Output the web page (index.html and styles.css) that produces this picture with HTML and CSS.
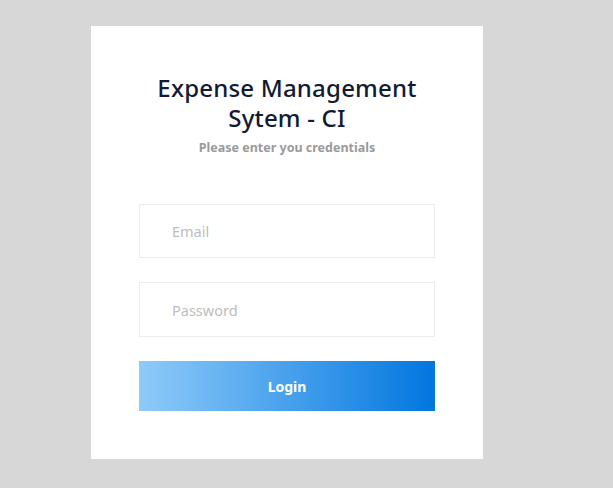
FILE: index.html
```html
<!DOCTYPE html>
<html>
<head>
<meta charset="utf-8">
<link rel="stylesheet" href="styles.css">
</head>
<body>
<div class="card">
  <h1 class="title">Expense Management<br>Sytem - CI</h1>
  <p class="subtitle">Please enter you credentials</p>
  <form class="form">
    <input class="field" type="email" placeholder="Email">
    <input class="field" type="password" placeholder="Password">
    <button class="btn" type="button">Login</button>
  </form>
</div>
</body>
</html>
```
FILE: styles.css
```css
html, body {
  margin: 0;
  padding: 0;
  background: #d7d7d7;
  font-family: "Noto Sans", "Open Sans", sans-serif;
}
body {
  padding: 26px 0 0 91px;
  height: 488px;
  box-sizing: border-box;
}
.card {
  width: 392px;
  height: 433px;
  background: #fff;
  box-sizing: border-box;
  padding: 47px 48px 0;
  display: flex;
  flex-direction: column;
  align-items: center;
}
.title {
  margin: 0;
  font-size: 24px;
  line-height: 30px;
  font-weight: 500;
  color: #131a33;
  text-align: center;
  letter-spacing: 0.2px;
}
.subtitle {
  margin: 7px 0 0;
  font-size: 12.5px;
  line-height: 16px;
  font-weight: 700;
  color: #9a9a9a;
}
.form {
  margin-top: 48px;
  width: 296px;
  display: flex;
  flex-direction: column;
  gap: 24px;
}
.field {
  height: 54px;
  box-sizing: border-box;
  border: 1px solid #ececec;
  padding: 0 0 0 32px;
  font-family: inherit;
  font-size: 14.5px;
  color: #333;
  outline: none;
  margin: 0;
}
.field + .field {
  height: 55px;
}
.field::placeholder {
  color: #bdbdbd;
}
.btn {
  height: 50px;
  border: none;
  margin: 0;
  background: linear-gradient(to right, #8fcbf9, #0176df);
  color: #fff;
  font-family: inherit;
  font-size: 14px;
  font-weight: 700;
  cursor: pointer;
}
```
